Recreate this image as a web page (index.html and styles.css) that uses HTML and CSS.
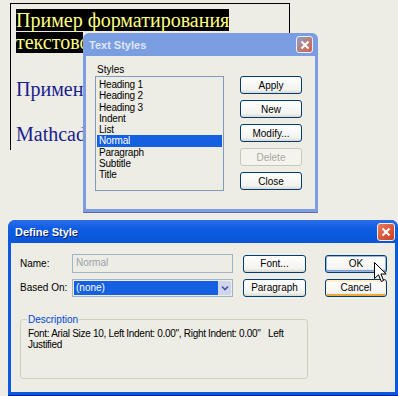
FILE: index.html
```html
<!DOCTYPE html>
<html>
<head>
<meta charset="utf-8">
<link rel="stylesheet" href="styles.css">
</head>
<body>
<div class="desk">
  <div class="doc">
    <div class="hl"><span>Пример форматирования</span></div>
    <div class="clip">
      <div class="hl"><span>текстового</span></div>
      <p class="blue p1">Применение</p>
      <p class="blue p2">Mathcad</p>
    </div>
  </div>

  <div class="win ts">
    <div class="title inactive">
      <span class="ttext">Text Styles</span>
      <span class="xbtn xin"><svg width="10" height="10" viewBox="0 0 10 10"><path d="M1.5 1.5L8.5 8.5M8.5 1.5L1.5 8.5" stroke="#fff" stroke-width="2"/></svg></span>
    </div>
    <div class="client tsc">
      <div class="lbl">Styles</div>
      <div class="tsrow">
        <ul class="list">
          <li>Heading 1</li>
          <li>Heading 2</li>
          <li>Heading 3</li>
          <li>Indent</li>
          <li>List</li>
          <li class="sel">Normal</li>
          <li>Paragraph</li>
          <li>Subtitle</li>
          <li>Title</li>
        </ul>
        <div class="btncol">
          <div class="btn">Apply</div>
          <div class="btn">New</div>
          <div class="btn">Modify...</div>
          <div class="btn dis">Delete</div>
          <div class="btn">Close</div>
        </div>
      </div>
    </div>
  </div>

  <div class="win ds">
    <div class="title active">
      <span class="ttext">Define Style</span>
      <span class="xbtn xact"><svg width="10" height="10" viewBox="0 0 10 10"><path d="M1.5 1.5L8.5 8.5M8.5 1.5L1.5 8.5" stroke="#fff" stroke-width="2"/></svg></span>
    </div>
    <div class="client dsc">
      <div class="drow r1">
        <span class="dl">Name:</span>
        <div class="field">Normal</div>
        <div class="btn b63">Font...</div>
        <div class="btn b62 def">OK</div>
      </div>
      <div class="drow r2">
        <span class="dl">Based On:</span>
        <div class="combo"><span class="cv">(none)</span><span class="arrow"><svg width="8" height="6" viewBox="0 0 8 6"><path d="M1 1.5L4 4.5L7 1.5" stroke="#4d4db0" stroke-width="1.6" fill="none"/></svg></span></div>
        <div class="btn b63">Paragraph</div>
        <div class="btn b62 foc">Cancel</div>
      </div>
      <fieldset class="grp">
        <legend>Description</legend>
        <div class="desc">Font: Arial Size 10, Left Indent: 0.00", Right Indent: 0.00"&nbsp;&nbsp; Left Justified</div>
      </fieldset>
    </div>
  </div>

  <svg class="cursor" width="14" height="22" viewBox="0 0 14 22"><path d="M0.5 0.5L0.5 16.5L4.5 12.8L7.3 19.5L9.6 18.5L6.9 12L12.2 12Z" fill="#fff" stroke="#000" stroke-width="1"/></svg>
</div>
</body>
</html>
```
FILE: styles.css
```css
* { box-sizing: border-box; }
html, body { margin: 0; padding: 0; }
body { background: #edece5; width: 398px; height: 396px; overflow: hidden; font-family: "Liberation Sans", Arial, sans-serif; }
.desk { position: relative; width: 398px; height: 396px; }

.doc { position: absolute; left: 10px; top: 3px; width: 280px; height: 147px; border: 1px solid #000; border-bottom: none; padding: 6px 0 0 5px; font-family: "Liberation Serif", "Times New Roman", serif; font-size: 20px; }
.hl { line-height: 21.5px; color: #ffff80; white-space: nowrap; }
.hl span { background: #000; }
.clip { width: 67px; overflow: hidden; }
.blue { color: #1a1f8f; margin: 0; white-space: nowrap; }
.p1 { margin-top: 25px; }
.p2 { margin-top: 22px; }

.win { position: absolute; display: flex; flex-direction: column; }
.ts { left: 83px; top: 33px; width: 235px; height: 180px; background: #7b9ee3; border-radius: 6px 6px 0 0; padding: 0 3px 3px 3px; border-bottom: 1px solid #6666b0; }
.ds { left: 8px; top: 220px; width: 390px; height: 176px; background: #0a58e0; border-radius: 7px 7px 0 0; padding: 0 3px 3px 3px; border-bottom: 1px solid #001c8a; }

.title { display: flex; align-items: center; justify-content: space-between; flex: none; }
.inactive { height: 23px; padding: 0 2px 0 3px; }
.active { height: 23px; padding: 0 1px 0 4px; background: linear-gradient(#2c6de8, #0c5ce2 40%, #0a55d8); margin: 0 -3px; padding-left: 7px; border-radius: 7px 7px 0 0; }
.ttext { font-weight: bold; font-size: 11px; color: #dfe7f8; }
.active .ttext { color: #fff; text-shadow: 1px 1px 0 #0a1f7a; }
.xbtn { display: flex; align-items: center; justify-content: center; width: 17px; height: 17px; border-radius: 3px; border: 1px solid #e8eefc; }
.xin { background: linear-gradient(135deg, #8aa0d4 0%, #b8807a 50%, #d06050 100%); }
.xact { background: linear-gradient(135deg, #e87a5c, #cc3e1c); width: 18px; height: 18px; margin-right: 2px; }

.client { background: #edece5; flex: 1; }
.tsc { padding: 8px 0 0 9px; }
.lbl { font-size: 10px; color: #000; margin-left: 2px; line-height: 12px; }
.tsrow { display: flex; margin-top: 0; }
.list { list-style: none; margin: 0; padding: 2px 1px; width: 129px; height: 115px; background: #edece5; border: 1px solid #7f9db9; font-size: 10px; line-height: 11.25px; letter-spacing: -0.2px; }
.list li { padding-left: 2px; color: #000; height: 11.25px; }
.list li.sel { background: #1560e0; color: #fff; }
.btncol { display: flex; flex-direction: column; gap: 6px; margin-left: 16px; }
.btn { width: 62px; height: 18px; border: 1px solid #003c74; border-radius: 3px; background: linear-gradient(#fff, #f3f3ef 80%, #d8d6cc); display: flex; align-items: center; justify-content: center; font-size: 10px; color: #000; }
.btn.dis { border-color: #c9c7ba; color: #aaa99f; background: #f4f3ee; }

.dsc { padding: 11px 0 0 9px; }
.drow { display: flex; align-items: center; }
.r1 { height: 19px; }
.r2 { height: 19px; margin-top: 5px; }
.dl { width: 52px; font-size: 10px; color: #000; }
.field { width: 161px; height: 19px; border: 1px solid #a0b4c8; color: #9aa3ae; font-size: 10px; padding: 2px 3px; }
.combo { width: 161px; height: 18px; border: 1px solid #a0b4c8; display: flex; padding: 1px; }
.cv { flex: 1; background: #1560e0; color: #fff; font-size: 10px; padding: 1px 2px; }
.arrow { width: 13px; background: #cfd6e8; display: flex; align-items: center; justify-content: center; border-radius: 2px; }
.b63 { width: 63px; margin-left: 10px; }
.b62 { margin-left: 19px; }
.def { box-shadow: inset 0 0 0 1px #97b5e9, inset 0 -1px 0 1px #7da2ce; }
.foc { box-shadow: inset 0 1px 0 1px #fff0c8, inset 0 -2px 0 0 #f2a83a; border-color: #003c74; }

.grp { margin: 17px 0 0 0; width: 288px; height: 65px; border: 1px solid #d0d0bf; border-radius: 3px; padding: 3px 7px 0 7px; }
.grp legend { font-size: 10px; color: #0046d5; padding: 0 1px; margin-left: -1px; }
.desc { font-size: 10px; color: #000; line-height: 11px; letter-spacing: -0.3px; }

.cursor { position: absolute; left: 374px; top: 262px; }
```
